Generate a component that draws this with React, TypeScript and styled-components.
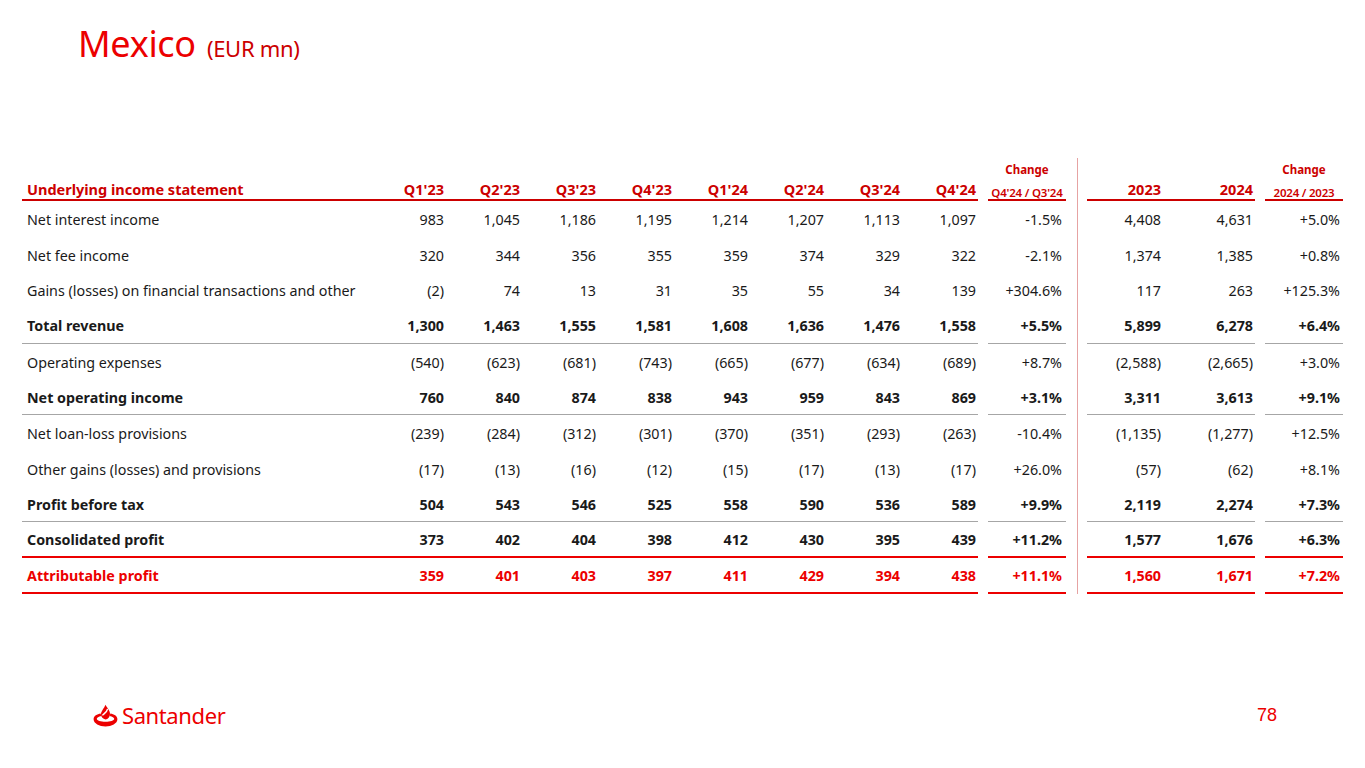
import * as React from 'react'
import styled, { createGlobalStyle, css } from 'styled-components'

const RED = '#ec0000'
const DARK_RED = '#cc0000'
const GRAY_LINE = '#a6a6a6'

const GlobalStyle = createGlobalStyle`
  html, body {
    margin: 0;
    padding: 0;
    background: #ffffff;
  }
  body {
    font-family: 'Noto Sans', 'Open Sans', sans-serif;
    color: #1a1a1a;
  }
`

type Variant = 'plain' | 'bold' | 'key'

interface RowData {
  label: string
  quarters: string[]
  change: string
  years: string[]
  yearChange: string
  variant: Variant
  line?: 'gray' | 'red'
}

const ROWS: RowData[] = [
  { label: 'Net interest income', quarters: ['983', '1,045', '1,186', '1,195', '1,214', '1,207', '1,113', '1,097'], change: '-1.5%', years: ['4,408', '4,631'], yearChange: '+5.0%', variant: 'plain' },
  { label: 'Net fee income', quarters: ['320', '344', '356', '355', '359', '374', '329', '322'], change: '-2.1%', years: ['1,374', '1,385'], yearChange: '+0.8%', variant: 'plain' },
  { label: 'Gains (losses) on financial transactions and other', quarters: ['(2)', '74', '13', '31', '35', '55', '34', '139'], change: '+304.6%', years: ['117', '263'], yearChange: '+125.3%', variant: 'plain' },
  { label: 'Total revenue', quarters: ['1,300', '1,463', '1,555', '1,581', '1,608', '1,636', '1,476', '1,558'], change: '+5.5%', years: ['5,899', '6,278'], yearChange: '+6.4%', variant: 'bold', line: 'gray' },
  { label: 'Operating expenses', quarters: ['(540)', '(623)', '(681)', '(743)', '(665)', '(677)', '(634)', '(689)'], change: '+8.7%', years: ['(2,588)', '(2,665)'], yearChange: '+3.0%', variant: 'plain' },
  { label: 'Net operating income', quarters: ['760', '840', '874', '838', '943', '959', '843', '869'], change: '+3.1%', years: ['3,311', '3,613'], yearChange: '+9.1%', variant: 'bold', line: 'gray' },
  { label: 'Net loan-loss provisions', quarters: ['(239)', '(284)', '(312)', '(301)', '(370)', '(351)', '(293)', '(263)'], change: '-10.4%', years: ['(1,135)', '(1,277)'], yearChange: '+12.5%', variant: 'plain' },
  { label: 'Other gains (losses) and provisions', quarters: ['(17)', '(13)', '(16)', '(12)', '(15)', '(17)', '(13)', '(17)'], change: '+26.0%', years: ['(57)', '(62)'], yearChange: '+8.1%', variant: 'plain' },
  { label: 'Profit before tax', quarters: ['504', '543', '546', '525', '558', '590', '536', '589'], change: '+9.9%', years: ['2,119', '2,274'], yearChange: '+7.3%', variant: 'bold', line: 'gray' },
  { label: 'Consolidated profit', quarters: ['373', '402', '404', '398', '412', '430', '395', '439'], change: '+11.2%', years: ['1,577', '1,676'], yearChange: '+6.3%', variant: 'bold', line: 'red' },
  { label: 'Attributable profit', quarters: ['359', '401', '403', '397', '411', '429', '394', '438'], change: '+11.1%', years: ['1,560', '1,671'], yearChange: '+7.2%', variant: 'key', line: 'red' },
]

const QUARTERS = ["Q1'23", "Q2'23", "Q3'23", "Q4'23", "Q1'24", "Q2'24", "Q3'24", "Q4'24"]

const Slide = styled.div`
  width: 1365px;
  height: 768px;
  display: flex;
  flex-direction: column;
  box-sizing: border-box;
  padding: 0 22px 0 22px;
`

const Title = styled.h1`
  margin: 18px 0 0 56px;
  font-weight: 400;
  font-size: 36px;
  line-height: 52px;
  color: ${RED};
  letter-spacing: -0.3px;
`

const TitleUnit = styled.span`
  font-size: 22px;
  margin-left: 2px;
  color: ${DARK_RED};
`

const Table = styled.div`
  display: flex;
  margin-top: 84px;
  padding-bottom: 8px;
`

const Section = styled.div<{ $gapAfter: number }>`
  display: flex;
  flex-direction: column;
  margin-right: ${(p) => p.$gapAfter}px;
`

const Divider = styled.div`
  width: 1px;
  background: #e6a3a3;
  margin-right: 9px;
`

/* rows alternate 36/36/35 so the pitch averages the slide's 35.7px */
const Row = styled.div<{ $cols: string; $line?: 'gray' | 'red' }>`
  display: grid;
  grid-template-columns: ${(p) => p.$cols};
  height: 36px;
  align-items: center;
  box-sizing: border-box;
  ${(p) =>
    p.$line === 'gray' &&
    css`
      border-bottom: 1px solid ${GRAY_LINE};
    `}
  ${(p) =>
    p.$line === 'red' &&
    css`
      border-bottom: 2px solid ${RED};
    `}
  &:nth-child(3n + 1) {
    height: 35px;
  }
`

const HeaderRow = styled.div<{ $cols: string }>`
  display: grid;
  grid-template-columns: ${(p) => p.$cols};
  height: 43px;
  align-items: end;
  box-sizing: border-box;
  border-bottom: 2px solid ${DARK_RED};
`

const Cell = styled.div<{ $variant: Variant; $pad: number; $left?: boolean }>`
  font-size: 14.3px;
  white-space: nowrap;
  text-align: ${(p) => (p.$left ? 'left' : 'right')};
  padding-left: ${(p) => (p.$left ? 5 : 0)}px;
  padding-right: ${(p) => (p.$left ? 0 : p.$pad)}px;
  font-weight: ${(p) => (p.$variant === 'plain' ? 400 : 700)};
  color: ${(p) => (p.$variant === 'key' ? RED : '#1a1a1a')};
`

const HeadCell = styled.div<{ $pad: number; $left?: boolean }>`
  font-size: 14.5px;
  font-weight: 700;
  color: ${DARK_RED};
  white-space: nowrap;
  text-align: ${(p) => (p.$left ? 'left' : 'right')};
  padding-left: ${(p) => (p.$left ? 5 : 0)}px;
  padding-right: ${(p) => (p.$left ? 0 : p.$pad)}px;
`

const ChangeHead = styled.div`
  display: flex;
  flex-direction: column;
  align-items: center;
  color: ${DARK_RED};
  font-size: 11.5px;
  line-height: 23px;
  white-space: nowrap;
`

const ChangeTitle = styled.span`
  font-weight: 700;
`

const ChangePeriod = styled.span`
  font-weight: 600;
  letter-spacing: -0.2px;
`

const Footer = styled.div`
  margin-top: auto;
  margin-bottom: 41px;
  display: flex;
  align-items: center;
  justify-content: space-between;
  padding: 0 66px 0 71px;
`

const Logo = styled.div`
  display: flex;
  align-items: center;
  gap: 4px;
  color: ${RED};
`

const LogoWord = styled.span`
  font-family: 'Noto Sans', 'Open Sans', sans-serif;
  font-size: 22px;
  letter-spacing: -0.4px;
  line-height: 24px;
`

const PageNumber = styled.span`
  font-family: 'Liberation Sans', Arial, sans-serif;
  font-size: 18px;
  color: ${RED};
`

function Flame() {
  return (
    <svg width="25" height="23" viewBox="0 0 25 23" aria-hidden>
      <path
        d="M12.5 0.8 C13.6 3.6 17 6 17 10 C17 13 14.9 15 12.5 15.6 C10.1 15 8 13 8 10.3 C8 7.2 11 4.6 12.5 0.8 Z"
        fill={RED}
      />
      <path d="M9.4 11.4 C11 9.6 14.2 7.8 14.6 4.8" stroke="#fff" strokeWidth="1.4" fill="none" />
      <path
        d="M0.6 15.2 C0.6 12 4.2 10.2 7.6 9.6 L8.4 12 C5.6 12.6 3.8 13.6 3.8 14.8 C3.8 16.6 7.8 17.8 12.5 17.8 C17.2 17.8 21.2 16.6 21.2 14.8 C21.2 13.6 19.4 12.6 16.6 12 L17.4 9.6 C20.8 10.2 24.4 12 24.4 15.2 C24.4 19.4 18.6 22.4 12.5 22.4 C6.4 22.4 0.6 19.4 0.6 15.2 Z"
        fill={RED}
      />
    </svg>
  )
}

const MAIN_COLS = '348px repeat(8, 76px)'
const CHANGE_COLS = '78px'
const YEAR_COLS = '76px 92px'

export default function App() {
  return (
    <>
      <GlobalStyle />
      <Slide>
        <Title>
          Mexico <TitleUnit>(EUR mn)</TitleUnit>
        </Title>

        <Table>
          <Section $gapAfter={10}>
            <HeaderRow $cols={MAIN_COLS}>
              <HeadCell $pad={0} $left>Underlying income statement</HeadCell>
              {QUARTERS.map((q) => (
                <HeadCell key={q} $pad={2}>{q}</HeadCell>
              ))}
            </HeaderRow>
            {ROWS.map((r) => (
              <Row key={r.label} $cols={MAIN_COLS} $line={r.line}>
                <Cell $variant={r.variant} $pad={0} $left>{r.label}</Cell>
                {r.quarters.map((v, i) => (
                  <Cell key={i} $variant={r.variant} $pad={2}>{v}</Cell>
                ))}
              </Row>
            ))}
          </Section>

          <Section $gapAfter={11}>
            <HeaderRow $cols={CHANGE_COLS}>
              <ChangeHead>
                <ChangeTitle>Change</ChangeTitle>
                <ChangePeriod>Q4'24 / Q3'24</ChangePeriod>
              </ChangeHead>
            </HeaderRow>
            {ROWS.map((r) => (
              <Row key={r.label} $cols={CHANGE_COLS} $line={r.line}>
                <Cell $variant={r.variant} $pad={4}>{r.change}</Cell>
              </Row>
            ))}
          </Section>

          <Divider />

          <Section $gapAfter={10}>
            <HeaderRow $cols={YEAR_COLS}>
              <HeadCell $pad={2}>2023</HeadCell>
              <HeadCell $pad={2}>2024</HeadCell>
            </HeaderRow>
            {ROWS.map((r) => (
              <Row key={r.label} $cols={YEAR_COLS} $line={r.line}>
                {r.years.map((v, i) => (
                  <Cell key={i} $variant={r.variant} $pad={2}>{v}</Cell>
                ))}
              </Row>
            ))}
          </Section>

          <Section $gapAfter={0}>
            <HeaderRow $cols={CHANGE_COLS}>
              <ChangeHead>
                <ChangeTitle>Change</ChangeTitle>
                <ChangePeriod>2024 / 2023</ChangePeriod>
              </ChangeHead>
            </HeaderRow>
            {ROWS.map((r) => (
              <Row key={r.label} $cols={CHANGE_COLS} $line={r.line}>
                <Cell $variant={r.variant} $pad={3}>{r.yearChange}</Cell>
              </Row>
            ))}
          </Section>
        </Table>

        <Footer>
          <Logo>
            <Flame />
            <LogoWord>Santander</LogoWord>
          </Logo>
          <PageNumber>78</PageNumber>
        </Footer>
      </Slide>
    </>
  )
}
